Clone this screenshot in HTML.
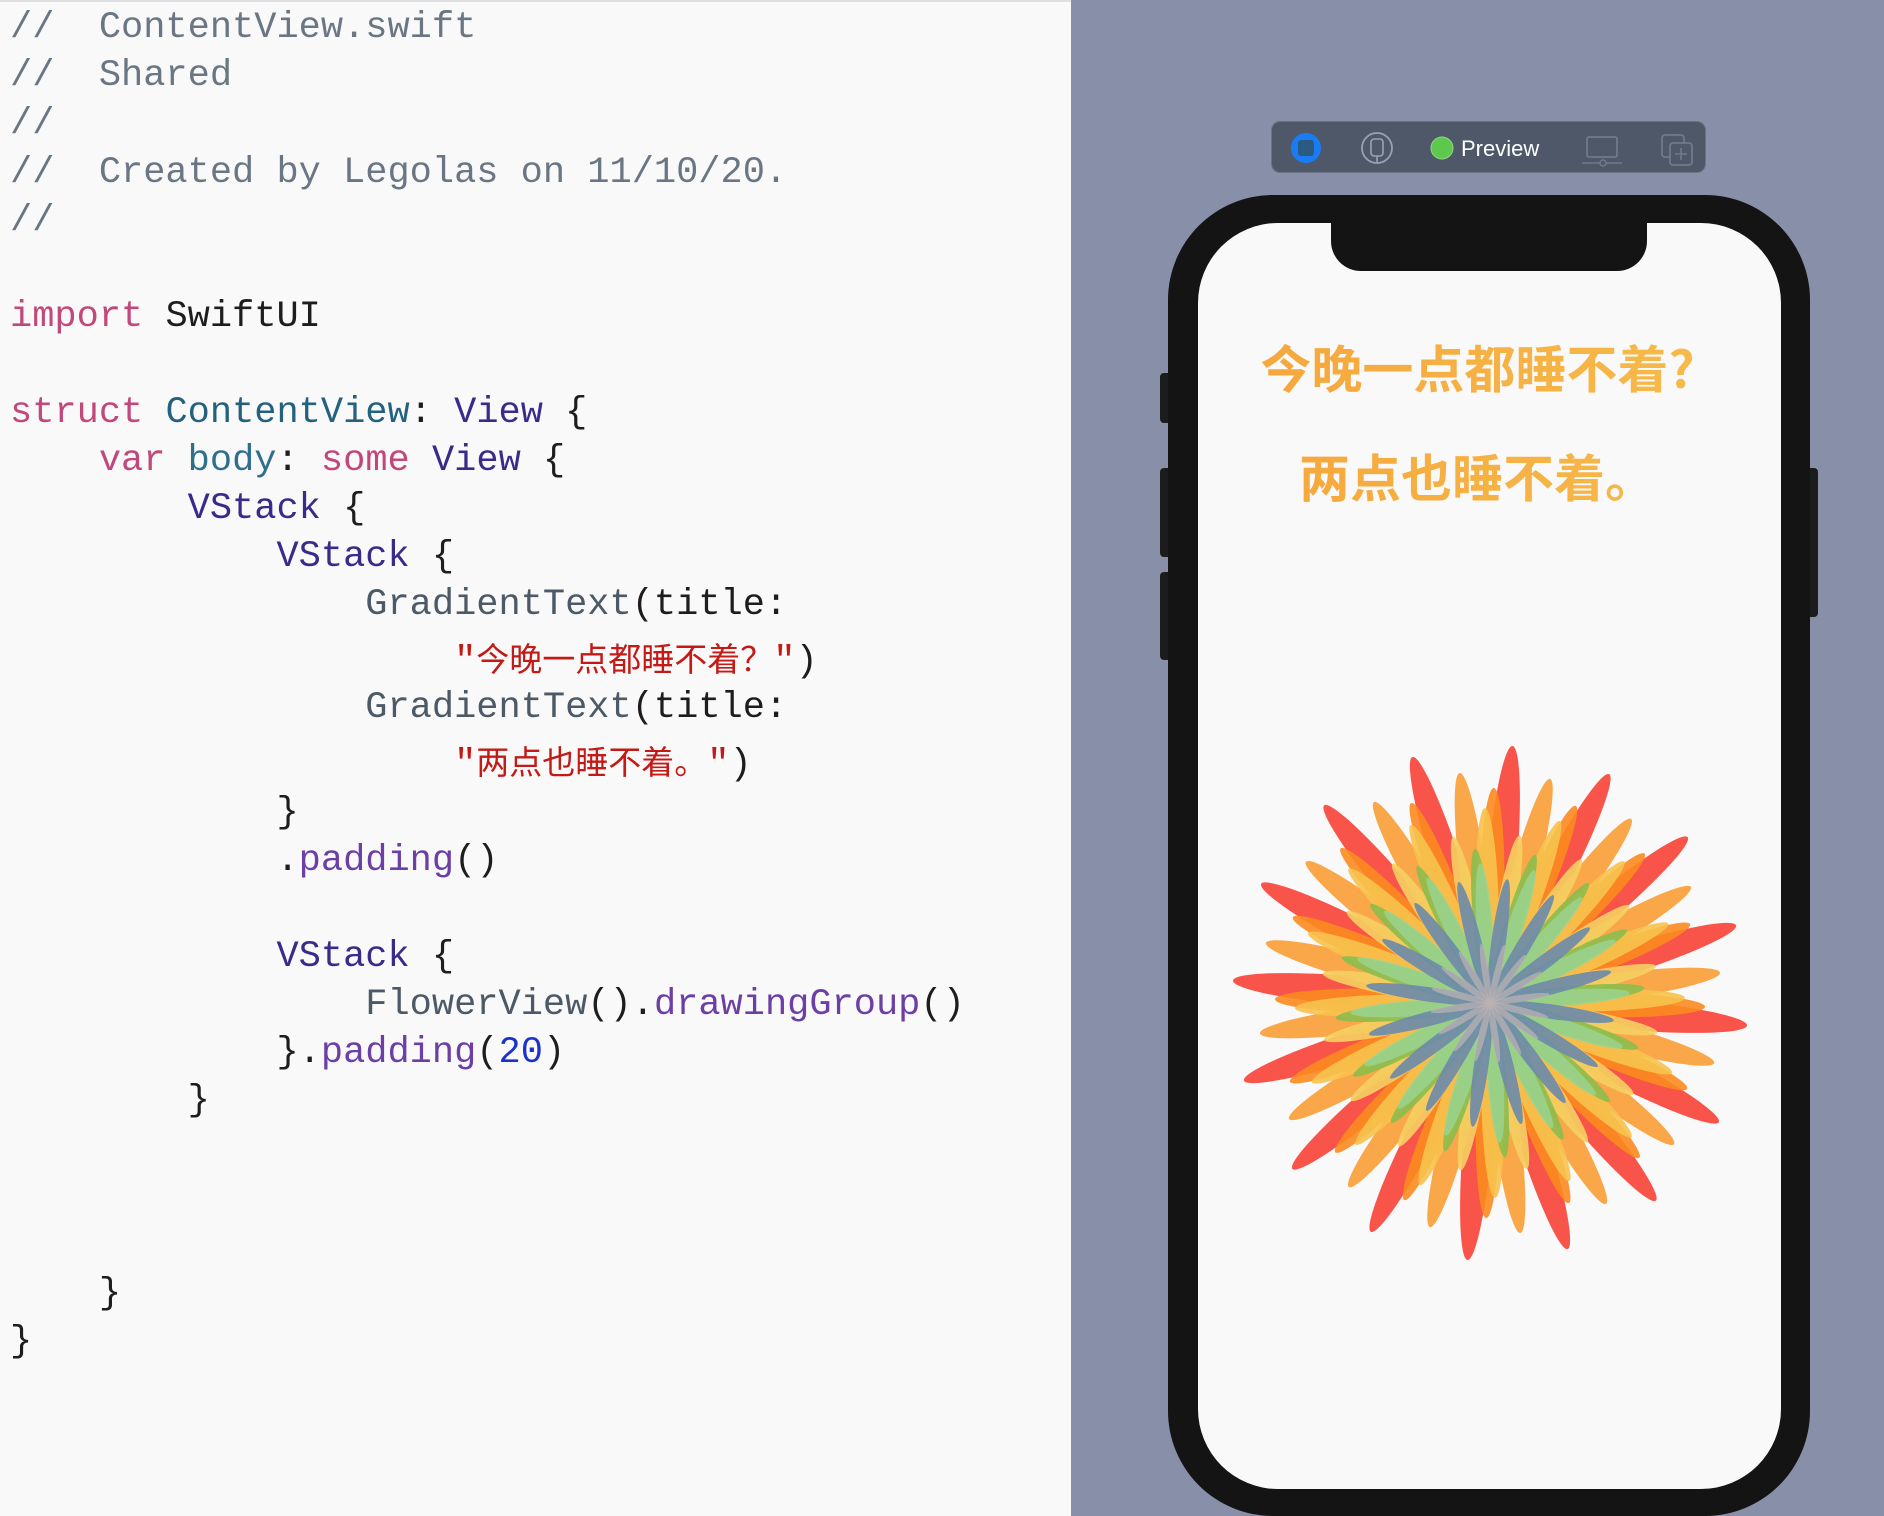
<!DOCTYPE html>
<html><head><meta charset="utf-8">
<style>
html,body{margin:0;padding:0;width:1884px;height:1516px;overflow:hidden;}
body{position:relative;background:#f9f9fa;}
#code{position:absolute;left:0;top:0;width:1071px;height:1516px;background:#f9f9fa;border-top:2px solid #e0e0e2;box-sizing:border-box;}
.l{position:absolute;left:10px;height:48px;line-height:48px;font-family:"Liberation Mono",monospace;font-size:37px;color:#1d1d1f;white-space:pre;}
.c{color:#6a7683}
.k{color:#c2477b}
.t{color:#23617e}
.v{color:#3a2b8a}
.p{color:#2f6f8c}
.g{color:#4c5966}
.m{color:#6b3fa6}
.n{color:#1c32cf}
.s{color:#c41a16;font-family:"Liberation Mono","Noto Sans CJK SC",monospace;}
.s .z{font-family:"Noto Sans CJK SC",sans-serif;font-size:33px;}
#right{position:absolute;left:1071px;top:0;width:813px;height:1516px;background:#8790a8;}
#tb{position:absolute;left:1271px;top:121px;width:435px;height:52px;background:#4e5869;border:1px solid #6a7488;border-radius:9px;box-sizing:border-box;}
#phone{position:absolute;left:1168px;top:195px;width:642px;height:1321px;background:#141414;border-radius:105px;}
#screen{position:absolute;left:1198px;top:223px;width:583px;height:1266px;background:#f9f9f9;border-radius:80px;overflow:hidden;}
#notch{position:absolute;left:1331px;top:210px;width:316px;height:61px;background:#141414;border-radius:0 0 30px 30px;}
.btn{position:absolute;background:#1c1c1c;border-radius:4px;}
.ph{position:absolute;left:1186px;width:583px;text-align:center;font-family:"Noto Sans CJK SC",sans-serif;font-weight:bold;font-size:51px;line-height:60px;background:linear-gradient(90deg,#f5a43a,#f7bd4c);-webkit-background-clip:text;background-clip:text;color:transparent;}
</style></head><body>
<div id="code">
<div class="l c" style="top:2px">//  ContentView.swift</div>
<div class="l c" style="top:50px">//  Shared</div>
<div class="l c" style="top:98px">//</div>
<div class="l c" style="top:147px">//  Created by Legolas on 11/10/20.</div>
<div class="l c" style="top:195px">//</div>
<div class="l" style="top:291px"><span class="k">import</span> SwiftUI</div>
<div class="l" style="top:387px"><span class="k">struct</span> <span class="t">ContentView</span>: <span class="v">View</span> {</div>
<div class="l" style="top:435px">    <span class="k">var</span> <span class="p">body</span>: <span class="k">some</span> <span class="v">View</span> {</div>
<div class="l" style="top:483px">        <span class="v">VStack</span> {</div>
<div class="l" style="top:531px">            <span class="v">VStack</span> {</div>
<div class="l" style="top:579px">                <span class="g">GradientText</span>(title:</div>
<div class="l" style="top:631px">                    <span class="s">"<span class="z">今晚一点都睡不着？</span>"</span>)</div>
<div class="l" style="top:682px">                <span class="g">GradientText</span>(title:</div>
<div class="l" style="top:734px">                    <span class="s">"<span class="z">两点也睡不着。</span>"</span>)</div>
<div class="l" style="top:787px">            }</div>
<div class="l" style="top:835px">            .<span class="m">padding</span>()</div>
<div class="l" style="top:931px">            <span class="v">VStack</span> {</div>
<div class="l" style="top:979px">                <span class="g">FlowerView</span>().<span class="m">drawingGroup</span>()</div>
<div class="l" style="top:1027px">            }.<span class="m">padding</span>(<span class="n">20</span>)</div>
<div class="l" style="top:1075px">        }</div>
<div class="l" style="top:1268px">    }</div>
<div class="l" style="top:1316px">}</div>
</div>
<div id="right"></div>
<div id="tb">
<svg width="435" height="52" viewBox="0 0 435 52" style="position:absolute;left:-1px;top:-1px">
<circle cx="35" cy="27" r="15" fill="#1a7cf5"/>
<rect x="27" y="19" width="16" height="16" rx="3" fill="#2b5a83"/>
<circle cx="106" cy="27" r="15" fill="none" stroke="#9aa2b0" stroke-width="1.8"/>
<rect x="100" y="18" width="12" height="17" rx="3" fill="none" stroke="#9aa2b0" stroke-width="1.6"/>
<line x1="106" y1="35" x2="106" y2="41" stroke="#9aa2b0" stroke-width="1.6"/>
<circle cx="171" cy="27" r="11" fill="#5ec84e" stroke="#8fd97f" stroke-width="1"/>
<text x="190" y="35" font-family="Liberation Sans,sans-serif" font-size="22" fill="#fff">Preview</text>
<rect x="316" y="16" width="30" height="20" rx="2" fill="none" stroke="#6f7a8a" stroke-width="1.8"/>
<line x1="311" y1="42" x2="351" y2="42" stroke="#6f7a8a" stroke-width="1.6"/>
<circle cx="332" cy="42" r="3" fill="#4e5869" stroke="#6f7a8a" stroke-width="1.5"/>
<rect x="391" y="14" width="22" height="22" rx="3" fill="none" stroke="#6f7a8a" stroke-width="1.8"/>
<rect x="399" y="22" width="22" height="22" rx="3" fill="#4e5869" stroke="#6f7a8a" stroke-width="1.8"/>
<path d="M410 27v12M404 33h12" stroke="#6f7a8a" stroke-width="1.6"/>
</svg>
</div>
<div class="btn" style="left:1160px;top:373px;width:12px;height:50px"></div>
<div class="btn" style="left:1160px;top:468px;width:12px;height:89px"></div>
<div class="btn" style="left:1160px;top:572px;width:12px;height:88px"></div>
<div class="btn" style="left:1806px;top:468px;width:12px;height:149px"></div>
<div id="phone"></div>
<div id="screen"></div>
<div id="notch"></div>
<div class="ph" style="top:336px">今晚一点都睡不着?</div>
<div class="ph" style="top:445px">两点也睡不着。</div>
<svg width="600" height="600" viewBox="-300 -300 600 600" style="position:absolute;left:1190px;top:703px">
<defs>
<g id="ring">
<ellipse cx="0.5" cy="0" rx="0.5" ry="0.058" transform="rotate(0)"/>
<ellipse cx="0.5" cy="0" rx="0.5" ry="0.058" transform="rotate(22.5)"/>
<ellipse cx="0.5" cy="0" rx="0.5" ry="0.058" transform="rotate(45)"/>
<ellipse cx="0.5" cy="0" rx="0.5" ry="0.058" transform="rotate(67.5)"/>
<ellipse cx="0.5" cy="0" rx="0.5" ry="0.058" transform="rotate(90)"/>
<ellipse cx="0.5" cy="0" rx="0.5" ry="0.058" transform="rotate(112.5)"/>
<ellipse cx="0.5" cy="0" rx="0.5" ry="0.058" transform="rotate(135)"/>
<ellipse cx="0.5" cy="0" rx="0.5" ry="0.058" transform="rotate(157.5)"/>
<ellipse cx="0.5" cy="0" rx="0.5" ry="0.058" transform="rotate(180)"/>
<ellipse cx="0.5" cy="0" rx="0.5" ry="0.058" transform="rotate(202.5)"/>
<ellipse cx="0.5" cy="0" rx="0.5" ry="0.058" transform="rotate(225)"/>
<ellipse cx="0.5" cy="0" rx="0.5" ry="0.058" transform="rotate(247.5)"/>
<ellipse cx="0.5" cy="0" rx="0.5" ry="0.058" transform="rotate(270)"/>
<ellipse cx="0.5" cy="0" rx="0.5" ry="0.058" transform="rotate(292.5)"/>
<ellipse cx="0.5" cy="0" rx="0.5" ry="0.058" transform="rotate(315)"/>
<ellipse cx="0.5" cy="0" rx="0.5" ry="0.058" transform="rotate(337.5)"/>
</g>
</defs>
<use href="#ring" fill="#f8544a" transform="rotate(-85) scale(258)"/>
<use href="#ring" fill="#f9a23e" fill-opacity="0.95" transform="rotate(-75) scale(232)"/>
<use href="#ring" fill="#fb8a1f" fill-opacity="0.9" transform="rotate(-89) scale(215)"/>
<use href="#ring" fill="#f7c24c" fill-opacity="0.9" transform="rotate(-69) scale(195)"/>
<use href="#ring" fill="#f5cf62" fill-opacity="0.9" transform="rotate(-80) scale(170)"/>
<use href="#ring" fill="#8cbc4e" fill-opacity="0.9" transform="rotate(-73) scale(155)"/>
<use href="#ring" fill="#9ad595" fill-opacity="0.8" transform="rotate(-94) scale(140)"/>
<use href="#ring" fill="#6c8aaa" fill-opacity="0.9" transform="rotate(-82) scale(125)"/>
<use href="#ring" fill="#bfb4b4" fill-opacity="0.7" transform="rotate(-76) scale(60)"/>
</svg>
</body></html>
